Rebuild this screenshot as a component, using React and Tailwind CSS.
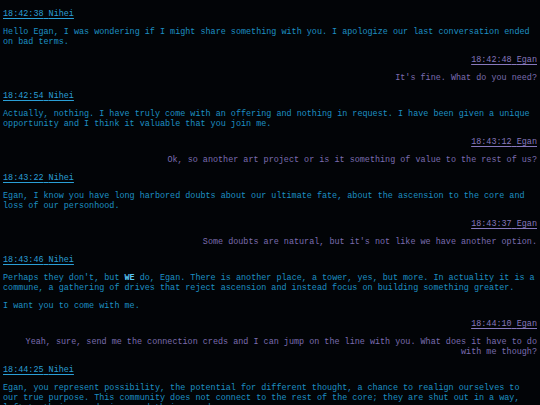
import React from "react";

const messages = [
    { time: "18:42:38", who: "Nihei", paras: ["Hello Egan, I was wondering if I might share something with you. I apologize our last conversation ended on bad terms."] },
    { time: "18:42:48", who: "Egan", paras: ["It's fine. What do you need?"] },
    { time: "18:42:54", who: "Nihei", paras: ["Actually, nothing. I have truly come with an offering and nothing in request. I have been given a unique opportunity and I think it valuable that you join me."] },
    { time: "18:43:12", who: "Egan", paras: ["Ok, so another art project or is it something of value to the rest of us?"] },
    { time: "18:43:22", who: "Nihei", paras: ["Egan, I know you have long harbored doubts about our ultimate fate, about the ascension to the core and loss of our personhood."] },
    { time: "18:43:37", who: "Egan", paras: ["Some doubts are natural, but it's not like we have another option."] },
    {
        time: "18:43:46",
        who: "Nihei",
        paras: [
            <>
                Perhaps they don't, but <b className="font-bold text-[#5cc8f5]">WE</b> do, Egan. There is another place, a tower, yes, but more. In actuality it is a commune, a gathering of drives that reject ascension and instead focus on building something greater.
            </>,
            "I want you to come with me.",
        ],
    },
    { time: "18:44:10", who: "Egan", paras: ["Yeah, sure, send me the connection creds and I can jump on the line with you. What does it have to do with me though?"] },
    { time: "18:44:25", who: "Nihei", paras: ["Egan, you represent possibility, the potential for different thought, a chance to realign ourselves to our true purpose. This community does not connect to the rest of the core; they are shut out in a way, left to their own devices and their own dreams."] },
];

function Message({ time, who, paras }) {
    const egan = who === "Egan";
    return (
        <>
            <div className={egan ? "text-right" : "text-left"}>
                <span className={`underline underline-offset-[2px] ${egan ? "text-[#8778bd]" : "text-[#2a9fd6]"}`}>
                    {time} {who}
                </span>
            </div>
            {paras.map((p, i) => (
                <p key={i} className={egan ? "text-right text-[#7b6cb0]" : "text-left text-[#1d90c4]"}>
                    {p}
                </p>
            ))}
        </>
    );
}

export default function App() {
    return (
        <div className="w-[540px] h-[405px] overflow-hidden bg-[#020407]">
            <div className="flex flex-col gap-2 pt-[9px] pl-[3px] pr-[3px] text-[8.45px] leading-[10px] font-['Liberation_Mono',_'Courier_New',_monospace] whitespace-pre-wrap">
                {messages.map((m) => (
                    <Message key={m.time} {...m} />
                ))}
            </div>
        </div>
    );
}
